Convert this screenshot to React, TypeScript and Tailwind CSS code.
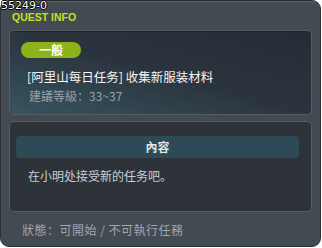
import React from "react";

const cjk = "font-['Noto_Sans_CJK_SC','Noto_Sans',sans-serif]";

export default function App() {
  return (
    <div className="relative h-[248px] w-[322px] bg-white">
      <div className="flex h-[247px] w-[321px] flex-col rounded-[9px] border border-[#2a2f35] bg-[#434a52] px-[8px] shadow-[inset_0_1px_0_#5a6169]">
        <div className="h-[29px] pl-[3px] pt-[10px] font-['Liberation_Sans',sans-serif] text-[10.5px] font-bold leading-[12px] text-[#c6e01f]">
          QUEST INFO
        </div>

        <div className="h-[85px] rounded-[5px] border border-[#555c63] bg-linear-to-tr from-[#37555f] via-[#2b343e] to-[#262c35] pt-[11px] shadow-[inset_0_1px_0_#1e232a]">
          <div className="ml-[11px] flex h-[16px] w-[60px] items-center justify-center rounded-full bg-[#8db21c]">
            <span className={`${cjk} text-[12px] font-bold leading-none text-white`}>一般</span>
          </div>
          <div className={`${cjk} ml-[17px] mt-[11px] text-[12.5px] leading-[16px] text-[#f4f6f7]`}>
            [阿里山每日任务] 收集新服装材料
          </div>
          <div className={`${cjk} ml-[19px] mt-[3px] text-[12px] leading-[16px] text-[#97a1a9]`}>
            建議等級：33~37
          </div>
        </div>

        <div className="mt-[6px] h-[91px] rounded-[5px] border border-[#555c63] bg-[#2e333a] pl-[6px] pr-[12px] pt-[14px]">
          <div className="flex h-[22px] items-center justify-center rounded-[4px] bg-[#2f4a57]">
            <span className={`${cjk} text-[12px] font-bold leading-none text-[#dfe5e8]`}>內容</span>
          </div>
          <div className={`${cjk} ml-[12px] mt-[10px] text-[12px] leading-[16px] text-[#c9ced3]`}>
            在小明处接受新的任务吧。
          </div>
        </div>

        <div className={`${cjk} ml-[13px] mt-[10px] text-[12px] leading-[16px] tracking-[0.5px] text-[#a0a7ad]`}>
          狀態：可開始 / 不可執行任務
        </div>
      </div>

      <div className="absolute left-[1px] top-0 font-['DejaVu_Sans',sans-serif] text-[11px] leading-[12px] text-white [text-shadow:1px_0_0_#000,-1px_0_0_#000,0_1px_0_#000,0_-1px_0_#000]">
        55249-0
      </div>
    </div>
  );
}
